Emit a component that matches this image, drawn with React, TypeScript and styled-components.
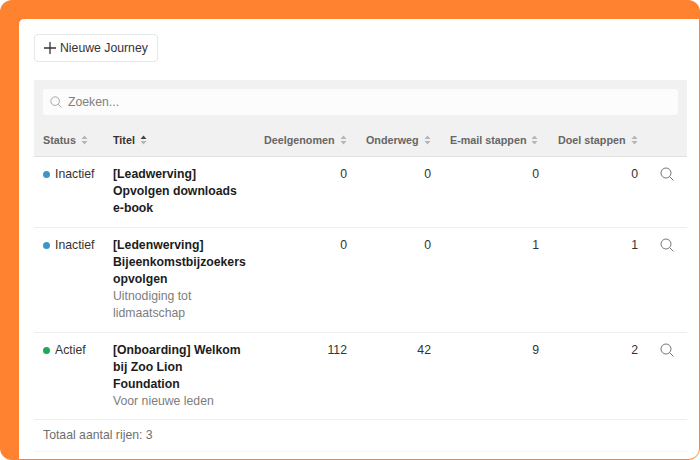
import React from "react";
import styled, { createGlobalStyle } from "styled-components";

const Global = createGlobalStyle`
  html, body { margin: 0; padding: 0; background: #fff; }
  body { font-family: "Liberation Sans", Arial, sans-serif; }
`;

const Frame = styled.div`
  width: 700px;
  height: 460px;
  box-sizing: border-box;
  background: #ff8230;
  border-radius: 12px;
  padding: 19px 1px 1px 19px;
  overflow: hidden;
`;

const Card = styled.div`
  height: 100%;
  box-sizing: border-box;
  background: #fff;
  border-radius: 5px 0 10px 0;
  padding: 15px 12px 0 15px;
`;

const AddButton = styled.button`
  display: flex;
  align-items: center;
  gap: 3px;
  width: 124px;
  height: 28px;
  box-sizing: border-box;
  padding: 0 0 0 8px;
  background: #fff;
  border: 1px solid #e6e6e6;
  border-radius: 4px;
  font: 400 12.25px "Liberation Sans", sans-serif;
  color: #333;
`;

const Panel = styled.div`
  margin-top: 18px;
  background: #fcfcfc;
  height: 371px;
`;

const SearchArea = styled.div`
  background: #f1f1f1;
  padding: 9px 9px 0;
`;

const SearchBox = styled.div`
  display: flex;
  align-items: center;
  gap: 6px;
  height: 26px;
  padding: 0 7px;
  background: #fcfcfc;
  border-radius: 3px;
  font-size: 12.25px;
  color: #808080;
`;

const Table = styled.table`
  width: 653px;
  border-collapse: collapse;
  table-layout: fixed;
  background: #fff;
`;

const HeadCell = styled.th<{ $active?: boolean }>`
  height: 41px;
  box-sizing: border-box;
  padding: 9px 0 0 9px;
  background: #f1f1f1;
  border-bottom: 1px solid #e2e2e2;
  font-size: 10.75px;
  font-weight: 700;
  text-align: left;
  white-space: nowrap;
  color: ${(p) => (p.$active ? "#333" : "#666")};
`;

const HeadInner = styled.span`
  display: inline-flex;
  align-items: center;
  gap: 5px;
`;

const Cell = styled.td<{ $right?: boolean }>`
  vertical-align: top;
  padding: 9px ${(p) => (p.$right ? "10px" : "0")} 9px 9px;
  text-align: ${(p) => (p.$right ? "right" : "left")};
  font-size: 12.25px;
  line-height: 17.2px;
  color: #333;
  border-bottom: 1px solid #efefef;
`;

const FirstRowSpacer = styled.tr`
  height: 1px;
`;

const ActionCell = styled(Cell)`
  padding-left: 12px;
  padding-top: 10px;
  line-height: 0;
`;

const Status = styled.div`
  display: flex;
  align-items: center;
  gap: 5px;
`;

const Dot = styled.span<{ $color: string }>`
  flex: none;
  width: 7px;
  height: 7px;
  border-radius: 50%;
  background: ${(p) => p.$color};
`;

const RowTitle = styled.div`
  font-weight: 700;
  color: #1c1c1c;
  white-space: nowrap;
`;

const RowSub = styled.div`
  color: #7d7d7d;
  white-space: nowrap;
`;

const Footer = styled.div`
  padding: 9px;
  font-size: 12.25px;
  line-height: 13px;
  height: 13px;
  background: #fff;
  color: #6f6f6f;
  border-bottom: 1px solid #f4f4f4;
`;

const Sort = ({ up }: { up?: boolean }) => (
  <svg width="7" height="10" viewBox="0 0 7 10">
    <path d="M3.5 0.5L6.5 4H0.5Z" fill={up ? "#444" : "#b5b5b5"} />
    <path d="M3.5 9.5L0.5 6H6.5Z" fill="#b5b5b5" />
  </svg>
);

const Mag = ({ size, color }: { size: number; color: string }) => (
  <svg width={size} height={size} viewBox="0 0 14 14" fill="none" stroke={color} strokeWidth="1">
    <circle cx="6" cy="6" r="5" />
    <path d="M9.6 9.6L13.4 13.4" />
  </svg>
);

const rows = [
  { s: "Inactief", c: "#3f94c9", t: ["[Leadwerving]", "Opvolgen downloads", "e-book"], sub: [], v: [0, 0, 0, 0] },
  { s: "Inactief", c: "#3f94c9", t: ["[Ledenwerving]", "Bijeenkomstbijzoekers", "opvolgen"], sub: ["Uitnodiging tot", "lidmaatschap"], v: [0, 0, 1, 1] },
  { s: "Actief", c: "#1fa855", t: ["[Onboarding] Welkom", "bij Zoo Lion", "Foundation"], sub: ["Voor nieuwe leden"], v: [112, 42, 9, 2] },
];

const heads = ["Status", "Titel", "Deelgenomen", "Onderweg", "E-mail stappen", "Doel stappen"];
const widths = [70, 151, 102, 84, 108, 99, 39];

export default function App() {
  return (
    <Frame>
      <Global />
      <Card>
        <AddButton>
          <svg width="14" height="14" viewBox="0 0 14 14" stroke="#333" strokeWidth="1.3">
            <path d="M7 1V13M1 7H13" />
          </svg>
          Nieuwe Journey
        </AddButton>
        <Panel>
          <SearchArea>
            <SearchBox>
              <Mag size={12} color="#999" />
              Zoeken...
            </SearchBox>
          </SearchArea>
          <Table>
            <colgroup>
              {widths.map((w, i) => (
                <col key={i} width={w} />
              ))}
            </colgroup>
            <thead>
              <tr>
                {heads.map((h, i) => (
                  <HeadCell key={h} $active={i === 1}>
                    <HeadInner>
                      {h}
                      <Sort up={i === 1} />
                    </HeadInner>
                  </HeadCell>
                ))}
                <HeadCell />
              </tr>
              <FirstRowSpacer />
            </thead>
            <tbody>
              {rows.map((r) => (
                <tr key={r.t[0]}>
                  <Cell>
                    <Status>
                      <Dot $color={r.c} />
                      {r.s}
                    </Status>
                  </Cell>
                  <Cell>
                    {r.t.map((l) => (
                      <RowTitle key={l}>{l}</RowTitle>
                    ))}
                    {r.sub.map((l) => (
                      <RowSub key={l}>{l}</RowSub>
                    ))}
                  </Cell>
                  {r.v.map((n, i) => (
                    <Cell key={i} $right>
                      {n}
                    </Cell>
                  ))}
                  <ActionCell>
                    <Mag size={14} color="#777" />
                  </ActionCell>
                </tr>
              ))}
            </tbody>
          </Table>
          <Footer>Totaal aantal rijen: 3</Footer>
        </Panel>
      </Card>
    </Frame>
  );
}
